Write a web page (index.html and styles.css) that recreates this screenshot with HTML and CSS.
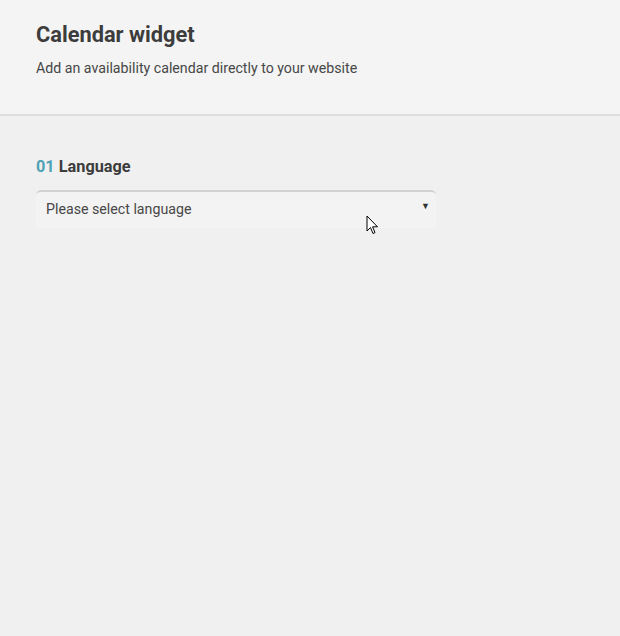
FILE: index.html
```html
<!DOCTYPE html>
<html>
<head>
<meta charset="utf-8">
<link rel="stylesheet" href="styles.css">
</head>
<body>
<header class="header">
  <h1 class="title">Calendar widget</h1>
  <p class="subtitle">Add an availability calendar directly to your website</p>
</header>
<main class="content">
  <h2 class="step"><span class="num">01</span> Language</h2>
  <div class="select">
    <span class="placeholder">Please select language</span>
    <span class="arrow">▼</span>
    <svg class="cursor" width="14" height="21" viewBox="0 0 14 21"><path d="M1 1 L1 16 L4.5 12.5 L7 18.5 L9 17.6 L6.6 11.8 L11.5 11.8 Z" fill="#fff" stroke="#000" stroke-width="1" stroke-linejoin="miter"/></svg>
  </div>
</main>
</body>
</html>
```
FILE: styles.css
```css
html, body {
  margin: 0;
  padding: 0;
}
body {
  background: #f0f0f0;
  font-family: Roboto, "Liberation Sans", sans-serif;
  color: #3b3b3b;
  width: 620px;
  height: 636px;
  overflow: hidden;
}
.header {
  background: #f4f4f4;
  border-bottom: 2px solid #dedede;
  padding: 22px 36px 0;
  height: 92px;
}
.title {
  margin: 0;
  font-size: 21.8px;
  font-weight: 700;
  line-height: 26px;
  color: #3c3c3c;
}
.subtitle {
  margin: 10px 0 0;
  font-size: 14.2px;
  line-height: 20px;
  color: #474747;
}
.content {
  padding: 41px 36px 0;
}
.step {
  margin: 0;
  font-size: 16.3px;
  font-weight: 700;
  line-height: 20px;
  color: #3c3c3c;
}
.num {
  color: #4fa2b4;
}
.select {
  position: relative;
  margin-top: 13px;
  width: 400px;
  height: 38px;
  box-sizing: border-box;
  background: #f3f3f3;
  border-top: 2px solid #d2d2d2;
  border-radius: 5px;
  display: flex;
  align-items: center;
  justify-content: space-between;
  padding: 0 6px 2px 10px;
}
.placeholder {
  font-size: 14.2px;
  color: #474747;
}
.arrow {
  font-size: 9px;
  color: #333;
  margin-top: -6px;
}
.cursor {
  position: absolute;
  left: 330px;
  top: 23px;
}
```
